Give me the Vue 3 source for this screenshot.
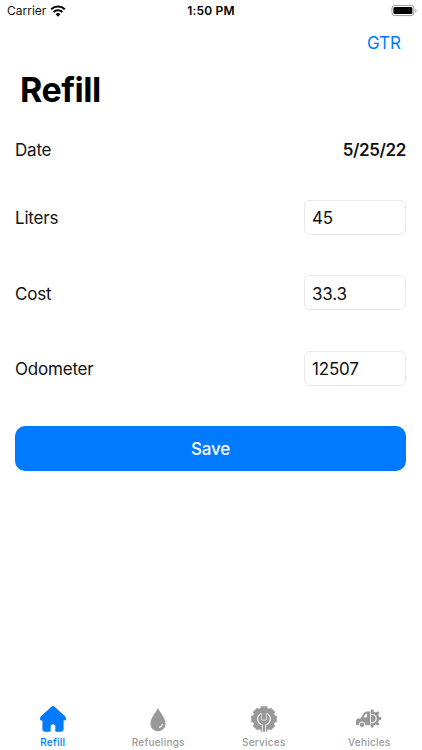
<script setup>
import { ref } from 'vue'

const date = ref('5/25/22')

const fields = ref([
  { id: 'liters', label: 'Liters', value: '45' },
  { id: 'cost', label: 'Cost', value: '33.3' },
  { id: 'odometer', label: 'Odometer', value: '12507' }
])

const tabs = [
  { id: 'refill', label: 'Refill' },
  { id: 'refuelings', label: 'Refuelings' },
  { id: 'services', label: 'Services' },
  { id: 'vehicles', label: 'Vehicles' }
]

const activeTab = ref('refill')
const teeth = [0, 45, 90, 135, 180, 225, 270, 315]
const halfTeeth = [0, 45, 90, 135, 180]
</script>

<template>
  <div class="screen">
    <header class="status-bar">
      <div class="carrier">
        <span>Carrier</span>
        <svg class="wifi" viewBox="0 0 16 12" width="16" height="12">
          <path d="M1.2 4.3a9.8 9.8 0 0 1 13.6 0" />
          <path d="M3.7 7a6.2 6.2 0 0 1 8.6 0" />
          <path class="dot" d="M8 11.7 5.6 9.2a3.5 3.5 0 0 1 4.8 0z" />
        </svg>
      </div>
      <span class="time">1:50 PM</span>
      <svg class="battery" viewBox="0 0 26 12" width="26" height="12">
        <rect class="shell" x="0.9" y="0.4" width="22" height="10.2" rx="3" />
        <rect x="2.4" y="1.9" width="19" height="7.2" rx="1.5" />
        <path class="cap" d="M24.4 3.5v4c1.5-.6 1.5-3.4 0-4z" />
      </svg>
    </header>

    <nav class="nav-bar">
      <button type="button" class="nav-link">GTR</button>
    </nav>

    <h1>Refill</h1>

    <form class="form" @submit.prevent>
      <div class="date-row">
        <span>Date</span>
        <strong>{{ date }}</strong>
      </div>

      <div v-for="field in fields" :key="field.id" class="form-row">
        <label :for="field.id">{{ field.label }}</label>
        <input :id="field.id" v-model="field.value" type="text" />
      </div>

      <button type="submit" class="btn-save"><span>Save</span></button>
    </form>

    <footer class="tab-bar">
      <button
        v-for="tab in tabs"
        :key="tab.id"
        type="button"
        class="tab"
        :class="[tab.id, { active: activeTab === tab.id }]"
        @click="activeTab = tab.id"
      >
        <svg v-if="tab.id === 'refill'" viewBox="0 0 28 28" width="28" height="28">
          <path d="M12.4 1.7Q14 .4 15.6 1.7L26.3 11.4Q27.9 14.4 26 15.4H24.6V24Q24.6 26.8 21.8 26.8H17.2Q16.3 26.8 16.3 26V21Q16.3 19.4 14.8 19.4H13.2Q11.7 19.4 11.7 21V26Q11.7 26.8 10.8 26.8H6.2Q3.4 26.8 3.4 24V15.4H2Q.1 14.4 1.7 11.4z" />
        </svg>

        <svg v-else-if="tab.id === 'refuelings'" viewBox="0 0 28 28" width="28" height="28">
          <path d="M14 3C12.6 7 6.4 12.6 6.4 18.7a7.6 7.6 0 0 0 15.2 0C21.6 12.6 15.4 7 14 3z" />
          <path class="cut-line" d="M14.9 22.3q2.8-.5 3.8-3.5" />
        </svg>

        <svg v-else-if="tab.id === 'services'" viewBox="0 0 28 28" width="28" height="28">
          <circle cx="14" cy="14" r="11.2" />
          <path
            v-for="angle in teeth"
            :key="angle"
            d="M10.1 4.5 11 1.2h6l.9 3.3z"
            :transform="`rotate(${angle} 14 14)`"
          />
          <path class="cut" d="M11.6 7.7A6.6 6.6 0 0 0 11.9 20.3V27.2h4.2V20.3A6.6 6.6 0 0 0 16.4 7.7v5.5q0 1.6-1.2 1.6h-2.4q-1.2 0-1.2-1.6z" />
          <path d="M11.1 9.1a5.6 5.6 0 0 0 1.6 10.3V26.8h2.6v-7.4a5.6 5.6 0 0 0 1.6-10.3v4.2q0 2.2-1.7 2.2h-2.4q-1.7 0-1.7-2.2z" />
          <path d="M12.8 7h2.4v6.2h-2.4z" />
        </svg>

        <svg v-else viewBox="0 0 28 28" width="28" height="28">
          <path d="M1 19.6V16q0-2 2.2-2.4l2.4-.4 3.2-5Q9.8 6.4 11.4 6.4h3.8v13.8H1.6q-.6 0-.6-.6z" />
          <path class="cut" d="m8.5 12.2 1.7-2.7q.4-.6 1-.6h.6v3.3z" />
          <circle class="wheel" cx="7" cy="19.8" r="2.8" />
          <path d="M16 6.5h1.2a7 7 0 0 1 0 14H16z" />
          <path
            v-for="angle in halfTeeth"
            :key="angle"
            d="M15.4 7.6 16 4.4h2.4l.6 3.2z"
            :transform="`rotate(${angle} 17.2 13.5)`"
          />
          <path class="cut-line" d="M16 9.5h1.2a4 4 0 0 1 0 8H16" />
        </svg>

        <span class="tab-label">{{ tab.label }}</span>
      </button>
    </footer>
  </div>
</template>

<style>
body {
  margin: 0;
  background: #fff;
}
</style>

<style scoped>
.screen {
  display: flex;
  flex-direction: column;
  box-sizing: border-box;
  width: 422px;
  height: 750px;
  background: #fff;
  color: #111;
  font-family: Inter, "Liberation Sans", sans-serif;
  font-size: 17px;
  letter-spacing: -0.2px;
  overflow: hidden;
}

button {
  padding: 0;
  border: 0;
  background: none;
  font: inherit;
  letter-spacing: inherit;
  cursor: pointer;
}

.status-bar {
  display: grid;
  grid-template-columns: 1fr auto 1fr;
  align-items: center;
  height: 21px;
  padding: 0 5px;
  font-size: 12px;
  letter-spacing: 0;
}

.carrier {
  display: flex;
  align-items: center;
  gap: 4px;
  padding-left: 2px;
}

.wifi {
  fill: none;
  stroke: #000;
  stroke-width: 2.1;
}

.wifi .dot {
  fill: #000;
  stroke: none;
}

.time {
  font-weight: 600;
  letter-spacing: 0.2px;
  color: #000;
}

.battery {
  justify-self: end;
}

.battery .shell {
  fill: none;
  stroke: #999;
  stroke-width: 1;
}

.battery .cap {
  fill: #999;
}

.nav-bar {
  display: flex;
  justify-content: flex-end;
  align-items: center;
  height: 44px;
  padding-right: 21px;
}

.nav-link {
  color: #007aff;
  letter-spacing: 0;
}

h1 {
  margin: 1px 0 0;
  padding-left: 20px;
  height: 48px;
  line-height: 48px;
  font-size: 34px;
  font-weight: 700;
  letter-spacing: -0.5px;
  color: #000;
}

.form {
  display: flex;
  flex-direction: column;
  padding: 6px 16px 0 15px;
}

.date-row,
.form-row {
  display: flex;
  justify-content: space-between;
  align-items: center;
}

.date-row {
  height: 59.5px;
}

.date-row strong {
  font-weight: 600;
  letter-spacing: -0.4px;
}

.form-row {
  height: 75.5px;
}

.form-row label {
  padding-top: 2px;
}

.form-row input {
  box-sizing: border-box;
  width: 102px;
  height: 35px;
  padding: 2px 7px 0;
  border: 1px solid #e8e8e8;
  border-radius: 6px;
  outline: none;
  background: #fff;
  color: #111;
  font: inherit;
  letter-spacing: inherit;
}

.btn-save {
  height: 45px;
  margin-top: 20px;
  border-radius: 10px;
  background: #007aff;
  color: #fff;
  font-weight: 500;
}

.tab-bar {
  display: flex;
  height: 50px;
  margin-top: auto;
}

.tab {
  display: flex;
  flex: 1;
  flex-direction: column;
  align-items: center;
  height: 50px;
  color: #999;
}

.tab svg {
  flex: none;
  margin-top: 5px;
  fill: currentColor;
}

.tab.active {
  color: #007aff;
}

.tab-label {
  margin-top: 3px;
  font-size: 10px;
  line-height: 12px;
  font-weight: 500;
  letter-spacing: 0.25px;
}

.tab svg .cut {
  fill: #fff;
}

.tab svg .cut-line {
  fill: none;
  stroke: #fff;
  stroke-width: 1.1;
}

.wheel {
  stroke: #fff;
  stroke-width: 1;
}
</style>
